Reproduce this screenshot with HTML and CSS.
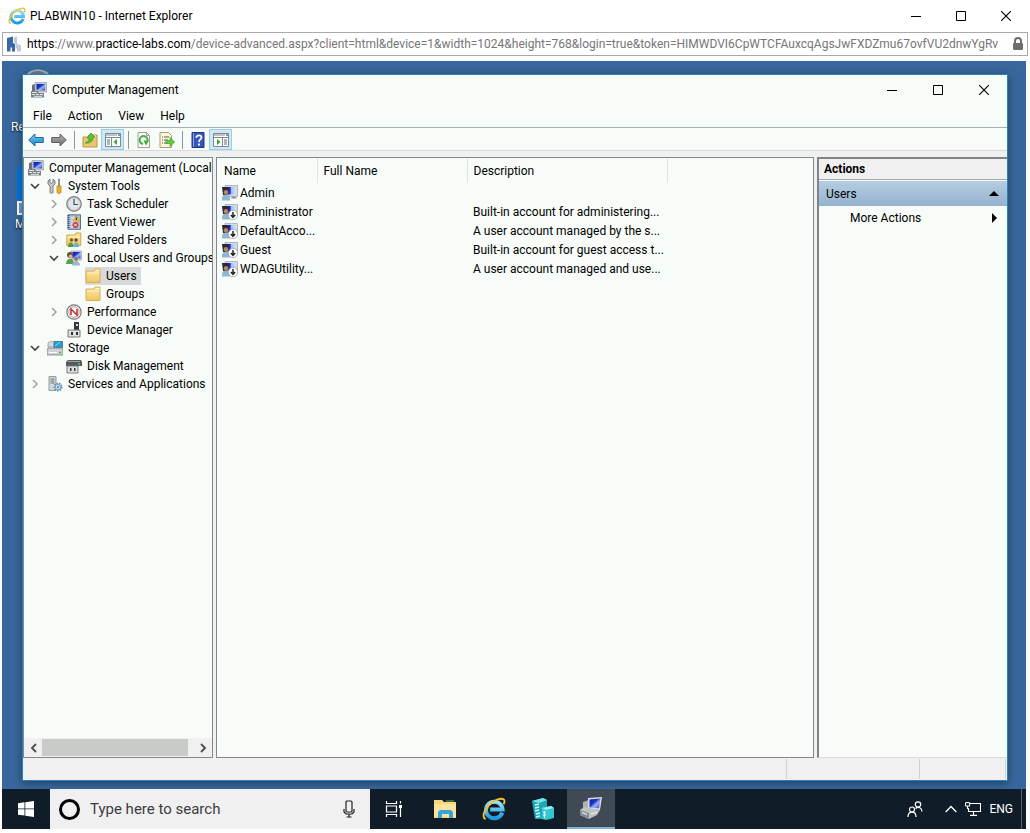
FILE: index.html
```html
<!DOCTYPE html>
<html lang="en">
<head>
<meta charset="utf-8">
<title>PLABWIN10 - Internet Explorer</title>
<link rel="stylesheet" href="styles.css">
</head>
<body>
<svg class="sprites" aria-hidden="true">
  <defs>
    <linearGradient id="g-screen" x1="0" y1="0" x2="1" y2="1"><stop offset="0" stop-color="#0a1fae"/><stop offset=".4" stop-color="#1b35c8"/><stop offset=".6" stop-color="#9db4f4"/><stop offset="1" stop-color="#2a46cf"/></linearGradient>
    <linearGradient id="g-pale" x1="0" y1="0" x2="1" y2="0"><stop offset="0" stop-color="#0b1c9c"/><stop offset=".35" stop-color="#2038b4"/><stop offset=".5" stop-color="#a9bdf2"/><stop offset="1" stop-color="#d5e0fb"/></linearGradient>
    <linearGradient id="g-folder" x1="0" y1="0" x2="0" y2="1"><stop offset="0" stop-color="#fbe7a2"/><stop offset="1" stop-color="#efc763"/></linearGradient>
    <linearGradient id="g-blue" x1="0" y1="0" x2="0" y2="1"><stop offset="0" stop-color="#7fd0f5"/><stop offset="1" stop-color="#1479c4"/></linearGradient>
    <linearGradient id="g-grey" x1="0" y1="0" x2="0" y2="1"><stop offset="0" stop-color="#b5b5b5"/><stop offset="1" stop-color="#6b6b6b"/></linearGradient>
    <linearGradient id="g-ie" x1="0" y1="0" x2="0" y2="1"><stop offset="0" stop-color="#9be4fb"/><stop offset="1" stop-color="#1b9ae0"/></linearGradient>
  </defs>
  <symbol id="i-ie" viewBox="0 0 24 24">
    <path d="M20.2 15.6A8.3 8.3 0 1 1 20.6 12.6H8.2" fill="none" stroke="url(#g-ie)" stroke-width="4"/>
    <path d="M3.6 22.2C-1.5 20 3.5 9.5 11.500 4.500 17 1.200 22.500.5 22.500 4.200c0 1-.3 2-.9 3" fill="none" stroke="#f3c12f" stroke-width="1.900"/>
  </symbol>
  <symbol id="i-site" viewBox="0 0 16 16">
    <path d="M1 2l6-1.500v7l2-1v9H6v-4H4.500v4H1z" fill="#3767a8"/><path d="M8 1.500l3-1v7l4 2v6h-4v-3H9.500V8L8 8z" fill="#c3cbd6"/>
  </symbol>
  <symbol id="i-lock" viewBox="0 0 12 14"><path d="M3 6V4a3 3 0 0 1 6 0v2" fill="none" stroke="#6d6d6d" stroke-width="2"/><rect x="1" y="6" width="10" height="7" rx="1" fill="#6d6d6d"/></symbol>
  <symbol id="i-min" viewBox="0 0 10 10"><path d="M0 5.500h10" stroke="#000"/></symbol>
  <symbol id="i-max" viewBox="0 0 10 10"><path d="M.5.5h9v9h-9z" fill="none" stroke="#000"/></symbol>
  <symbol id="i-close" viewBox="0 0 10 10"><path d="M0 0l10 10M10 0L0 10" stroke="#000" stroke-width="1.100"/></symbol>
  <symbol id="i-computer" viewBox="0 0 16 16">
    <path d="M1 3l3-1v7H1z" fill="#6b6f72"/><path d="M4 .5h11.500v9.500H4z" fill="#c7cdd6" stroke="#8a929e" stroke-width=".6"/><path d="M5.500 2h8.500v6.500H5.500z" fill="url(#g-screen)"/>
    <path d="M0 9h7l1 2h5v4.500H0z" fill="#7b8184"/><path d="M1 10.500h5M1 12.500h3M5 12.500h3M9 12.500h3M3 14.300h8" stroke="#e1e4e4" stroke-width="1"/>
  </symbol>
  <symbol id="i-back" viewBox="0 0 16 16"><path d="M.7 8L7 2v3.500h8.300v5H7V14z" fill="url(#g-blue)" stroke="#1c6ca4"/></symbol>
  <symbol id="i-forward" viewBox="0 0 16 16"><path d="M15.300 8L9 2v3.500H.7v5H9V14z" fill="url(#g-grey)" stroke="#616161"/></symbol>
  <symbol id="i-up" viewBox="0 0 16 16"><path d="M1 5h5l1-2h8v12H1z" fill="#eac670" stroke="#b99545"/><path d="M9 4h5" stroke="#fff3c8"/><path d="M3 11c3-1 4-2 4-5H5l4-5 4 4-2 .5c0 4-3 6-8 5.500z" fill="#5dbe35" stroke="#2f8c1a" stroke-width=".6"/></symbol>
  <symbol id="i-tree" viewBox="0 0 16 16"><path d="M.5 1.500h15v13H.5z" fill="#fff" stroke="#7d8790"/><path d="M1 3h11M1 5.500h14M6.500 6v8" stroke="#7d8790"/><path d="M13 3h2" stroke="#333"/><path d="M2 8h3M2 10h3M2 12h3" stroke="#526a80"/><path d="M12 7v6L8.500 10z" fill="#37a532"/></symbol>
  <symbol id="i-panel" viewBox="0 0 16 16"><path d="M.5 1.500h15v13H.5z" fill="#fff" stroke="#7d8790"/><path d="M1 3h11M1 5.500h14M9.500 6v8" stroke="#7d8790"/><path d="M13 3h2" stroke="#333"/><path d="M11 8h3M11 10h3M11 12h3" stroke="#526a80"/><path d="M4 7v6l3.500-3z" fill="#37a532"/></symbol>
  <symbol id="i-refresh" viewBox="0 0 16 16"><path d="M2 .5h8.500l3 3v12H2z" fill="#fafafa" stroke="#a0a0a0"/><path d="M10.500.5v3h3" fill="none" stroke="#a0a0a0"/><path d="M7 12A4 4 0 1 1 11.500 9" fill="none" stroke="#3faf36" stroke-width="1.900"/><path d="M7.500 8.500h5.500l-3 5z" fill="#3faf36"/></symbol>
  <symbol id="i-export" viewBox="0 0 16 16"><path d="M1 .5h8.500l3 3v12H1z" fill="#fdf6d6" stroke="#a69c78"/><path d="M3 5h1M5 5h5M3 8h1M5 8h4M3 11h1M5 11h4" stroke="#4c5868"/><path d="M7 8.500h4V5.500l4.700 4.500-4.700 4.500v-3H7z" fill="#67ca42" stroke="#3a9c24" stroke-width=".6"/></symbol>
  <symbol id="i-help" viewBox="0 0 16 16"><path d="M2 .5h12v15H2z" fill="#3456b8" stroke="#1c3688"/><path d="M3.500 1v14" stroke="#8aa2e4"/><path d="M6.300 5.700c0-3.200 5.200-3 5.200-.2 0 2-2.500 2-2.500 4.500" fill="none" stroke="#fff" stroke-width="1.700"/><path d="M8 11.500h2v2H8z" fill="#fff"/></symbol>
  <symbol id="i-tools" viewBox="0 0 16 16"><path d="M3 1v3.500l1.500 1L6 4.500V1l2 2v3L6 8v6.500c0 1-3 1-3 0V8L1 6V3z" fill="#c8c8c8" stroke="#5f6366" stroke-width=".8"/><path d="M11 1l2-.5V8h-2z" fill="#8d949a"/><path d="M10 8h4v6c0 2-4 2-4 0z" fill="#eeb21e" stroke="#a97811" stroke-width=".7"/></symbol>
  <symbol id="i-clock" viewBox="0 0 16 16"><circle cx="8" cy="8" r="7.200" fill="#eef3fa" stroke="#85898d" stroke-width="1.500"/><circle cx="8" cy="8" r="5.600" fill="#dde6f1" stroke="#d8c9a8" stroke-width=".8"/><path d="M8 3v5.500h4" fill="none" stroke="#3a4c66" stroke-width="1.200"/></symbol>
  <symbol id="i-event" viewBox="0 0 16 16"><path d="M2 .8h12.500v14.500H2z" fill="#a9c1de" stroke="#5c7194"/><path d="M2.500 1v14" stroke="#46566e" stroke-width="2" stroke-dasharray="1 1"/><path d="M5 4h5M5 7h4M5 10h3M5 13h2" stroke="#fff"/><path d="M10 1.500l4 5.500H7z" fill="#f6cb2f" stroke="#b48813" stroke-width=".5"/><path d="M10.300 3.500v2.500" stroke="#000"/><circle cx="9.500" cy="11" r="3" fill="#db3c33"/><path d="M8.300 9.800l2.400 2.400m0-2.400l-2.400 2.400" stroke="#fff"/></symbol>
  <symbol id="i-folder" viewBox="0 0 16 16"><path d="M1 14.500V3h8l1-2h5v13.500z" fill="url(#g-folder)" stroke="#d3a94c" stroke-width=".9"/><path d="M10.500 2.500h4" stroke="#fff8de"/><path d="M2 5h12" stroke="#fff1c0"/></symbol>
  <symbol id="i-shared" viewBox="0 0 16 16"><path d="M.8 13.500V3h8l1-2h5v12.500z" fill="url(#g-folder)" stroke="#c9a146" stroke-width=".9"/><path d="M2 5h12" stroke="#fff1c0"/><circle cx="5.500" cy="8" r="1.700" fill="#815433"/><circle cx="10" cy="8" r="1.700" fill="#5d4738"/><path d="M2 15c0-6 5.500-6 5.500 0z" fill="#4b9c43"/><path d="M7.500 15c0-6 5.500-6 5.500 0z" fill="#72afc9"/></symbol>
  <symbol id="i-people" viewBox="0 0 16 16"><path d="M5 1h10.500v9H5z" fill="#ccd4e0" stroke="#8b94a2" stroke-width=".6"/><path d="M6.500 2h8v6.500h-8z" fill="url(#g-screen)"/><circle cx="4" cy="5" r="3" fill="#6d5133"/><circle cx="4.600" cy="6.200" r="1.800" fill="#e2b189"/><path d="M0 14c0-7 8-7 8 0z" fill="#5da150"/><circle cx="10" cy="9" r="2" fill="#9b7657"/><path d="M6 15.500c0-6 8-6 8 0z" fill="#9bb7cd"/></symbol>
  <symbol id="i-user" viewBox="0 0 16 16"><path d="M3 .5h12.500v11H3z" fill="#d5dae3" stroke="#96a0ae" stroke-width=".7"/><path d="M5 2h9v7.500H5z" fill="url(#g-pale)"/><path d="M10 11.500h3l2 2H9z" fill="#8e959e"/><path d="M0 2h5l1 3-1 5H1z" fill="#2d2928"/><circle cx="4" cy="7.300" r="2.200" fill="#bd8663"/><path d="M0 15.500v-3c1-4 7-4 8 0v3z" fill="#8db8cf"/></symbol>
  <symbol id="i-user-off" viewBox="0 0 16 16"><use href="#i-user"/><circle cx="11" cy="11" r="4.700" fill="#fff" stroke="#8f959b" stroke-width=".7"/><path d="M11 8v5M8.800 11l2.200 2.300 2.200-2.300" fill="none" stroke="#20252a" stroke-width="1.500"/></symbol>
  <symbol id="i-perf" viewBox="0 0 16 16"><circle cx="8" cy="8" r="7.200" fill="#f8f6f5" stroke="#777" stroke-width="1.200"/><circle cx="8" cy="8" r="5.200" fill="#fff" stroke="#a98d89" stroke-width=".8"/><path d="M5 11V5l6 6V5" fill="none" stroke="#c52a26" stroke-width="1.500"/></symbol>
  <symbol id="i-device" viewBox="0 0 16 16"><path d="M8 0h5v9H8z" fill="#34383a"/><path d="M10 2h2v2h-2z" fill="#d8dbdc"/><path d="M2 8h12v7H2z" fill="#dfe0df" stroke="#777b7d"/><path d="M5 10h2v3H5zM10 10h2v3h-2z" fill="#303436"/></symbol>
  <symbol id="i-storage" viewBox="0 0 16 16"><path d="M1 3c2-2.500 6-2 7 0v4H1z" fill="#d4d8da" stroke="#8e9496" stroke-width=".7"/><path d="M7 1.500h8.500v6H7z" fill="#249fd6" stroke="#376c84" stroke-width=".8"/><path d="M8 6l5-4" stroke="#8bd7f3"/><path d="M1 8h14l1 2.500V15H0v-4.500z" fill="#cdd1d2" stroke="#767c7f" stroke-width=".8"/><path d="M2 12.500h8" stroke="#fff"/><path d="M12 12.500h2" stroke="#4ab234" stroke-width="1.500"/></symbol>
  <symbol id="i-disk" viewBox="0 0 16 16"><path d="M2 2h13l1 2v4H0V4z" fill="#54595b"/><path d="M2 3.500h12" stroke="#9fa4a6"/><path d="M12 6h2" stroke="#65ce4c" stroke-width="1.400"/><path d="M1 8h11v7H1z" fill="#dfe0df" stroke="#777b7d"/><path d="M4 10h1.500v3H4zM8 10h1.500v3H8z" fill="#303436"/></symbol>
  <symbol id="i-services" viewBox="0 0 16 16"><path d="M2 .5h7v14H2z" fill="#d3d7d9" stroke="#7f868a" stroke-width=".8"/><path d="M3.500 3h4M3.500 5h4M3.500 7h4" stroke="#6d7478"/><circle cx="11" cy="11" r="3.600" fill="#b5d2e6" stroke="#608fad" stroke-width="1.800" stroke-dasharray="1.500 1"/><circle cx="11" cy="11" r="2.700" fill="#cbe0ed" stroke="#6c9cbb" stroke-width=".8"/><circle cx="11" cy="11" r="1" fill="#527e9b"/></symbol>
  <symbol id="i-win" viewBox="0 0 16 16"><path d="M0 2.200l6.500-.9v6.200H0zM7.300 1.200L16 0v7.500H7.300zM0 8.300h6.500v6.300L0 13.700zM7.300 8.300H16V16l-8.700-1.200z" fill="#fff"/></symbol>
  <symbol id="i-mic" viewBox="0 0 12 18"><rect x="3" y="1" width="6" height="11" rx="1" fill="none" stroke="#222" stroke-width="1.200"/><path d="M1 9v3l2 2h6l2-2V9M6 14v3M3.500 17h5" fill="none" stroke="#222" stroke-width="1.200"/></symbol>
  <symbol id="i-taskview" viewBox="0 0 18 16"><path d="M1.500 0v2.500h10V0M1.500 16v-2.500h10V16M1.500 5h10v6h-10zM15.500 0v2.500M15.500 7v9" fill="none" stroke="#fff" stroke-width="1.200"/><path d="M14 4h3v3h-3z" fill="#fff"/></symbol>
  <symbol id="i-explorer" viewBox="0 0 24 20"><path d="M1 1h8l2 2h12v16H1z" fill="#f7d67c"/><path d="M1 5h22v13H1z" fill="#fbe39b"/><path d="M13 2h8" stroke="#5fb65d"/><path d="M5 19v-6l2-2h11l2 2v6h-4v-4H9v4z" fill="#35a6dc"/></symbol>
  <symbol id="i-server" viewBox="0 0 24 24"><path d="M1 4l11-3 4 2v19H4z" fill="#1ea7b5"/><path d="M1 4l11-3 4 2-8 3z" fill="#7be4e8"/><path d="M4 8l4-1M4 11l4-1M4 14l4-1M5 17l4-1M5 20l4-1" stroke="#d8fbfb" stroke-width="1.500"/><path d="M11 11l9-2 3 2v10l-8 2-4-1z" fill="#33c8d1"/><path d="M11 11l9-2 3 2-8 2z" fill="#98eef0"/><path d="M13.500 14v7M12 15l3 .5M12 18h3" stroke="#e2ffff"/></symbol>
  <symbol id="i-mmc" viewBox="0 0 24 24"><path d="M4 6l6-2v10l-6 2z" fill="#aeb3b6"/><path d="M9 2l14-1-2 13-12-1z" fill="#dcdfe2"/><path d="M10.500 3.500l11-1L20 12.300l-9.500-.8z" fill="url(#g-screen)"/><path d="M1 14l4-3 16 3-3 5-8 4-9-4z" fill="#bcc2c5"/><path d="M1 14l9 3v6l-9-4z" fill="#878e92"/><path d="M3 16.500l5 2M12 18l6-2" stroke="#eef0f1" stroke-width="1.300"/></symbol>
  <symbol id="i-contacts" viewBox="0 0 16 16"><g fill="none" stroke="#fff" stroke-width="1.200"><circle cx="5" cy="8.500" r="2.500"/><path d="M1 16c0-6.500 8-6.500 8 0"/><circle cx="11" cy="3.500" r="2.700"/><path d="M8.500 7.500c3-2.500 6.500-.5 6.500 3"/></g></symbol>
  <symbol id="i-caret" viewBox="0 0 12 8"><path d="M.7 7L6 1.500 11.300 7" fill="none" stroke="#fff" stroke-width="1.300"/></symbol>
  <symbol id="i-net" viewBox="0 0 16 14"><path d="M5 1.500h10.500v8H3.500V6M8.500 10v3M5 13.400h7" fill="none" stroke="#fff" stroke-width="1.100"/><path d="M.6.600h4v3.500h-4zM2.500 4v3" fill="none" stroke="#fff"/></symbol>
  <symbol id="i-open" viewBox="0 0 10 10"><path d="M1 3l4 4 4-4" fill="none" stroke="#404040" stroke-width="1.600"/></symbol>
  <symbol id="i-closed" viewBox="0 0 10 10"><path d="M3 1l4 4-4 4" fill="none" stroke="#a0a0a0" stroke-width="1.500"/></symbol>
  <symbol id="i-left" viewBox="0 0 10 10"><path d="M7 1L3 5l4 4" fill="none" stroke="#505050" stroke-width="1.900"/></symbol>
  <symbol id="i-right" viewBox="0 0 10 10"><path d="M3 1l4 4-4 4" fill="none" stroke="#505050" stroke-width="1.900"/></symbol>
</svg>

<header class="titlebar browser-title">
  <svg class="icon-18"><use href="#i-ie"/></svg>
  <h1 class="title">PLABWIN10 - Internet Explorer</h1>
  <button class="win-btn" aria-label="Minimize"><svg><use href="#i-min"/></svg></button>
  <button class="win-btn" aria-label="Maximize"><svg><use href="#i-max"/></svg></button>
  <button class="win-btn" aria-label="Close"><svg><use href="#i-close"/></svg></button>
</header>
<div class="address">
  <svg class="icon-16"><use href="#i-site"/></svg>
  <div class="url" role="textbox" aria-label="Address" contenteditable="true" spellcheck="false"><span class="url-strong">https</span>://www.<span class="url-strong">practice-labs.com</span>/device-advanced.aspx?client=html&amp;device=1&amp;width=1024&amp;height=768&amp;login=true&amp;token=HIMWDVI6CpWTCFAuxcqAgsJwFXDZmu67ovfVU2dnwYgRv</div>
  <svg class="lock"><use href="#i-lock"/></svg>
</div>

<div class="desktop">
  <div class="wallpaper">
    <div class="shortcut shortcut-bin"><svg viewBox="0 0 28 12"><path d="M3 5c4-6 18-6 22 0z" fill="#a3b0bc"/><path d="M6 5c3-4 12-4 16 0z" fill="#667a8e"/></svg><span>Re</span></div>
    <div class="shortcut shortcut-edge"><span class="edge-tile"><span class="link-badge"></span></span><span>M</span></div>

    <main class="window">
      <header class="titlebar">
        <svg class="icon-16"><use href="#i-computer"/></svg>
        <h2 class="title">Computer Management</h2>
        <button class="win-btn" aria-label="Minimize"><svg><use href="#i-min"/></svg></button>
        <button class="win-btn" aria-label="Maximize"><svg><use href="#i-max"/></svg></button>
        <button class="win-btn" aria-label="Close"><svg><use href="#i-close"/></svg></button>
      </header>
      <nav class="menu">
        <button>File</button><button>Action</button><button>View</button><button>Help</button>
      </nav>
      <div class="toolbar">
        <button aria-label="Back"><svg><use href="#i-back"/></svg></button>
        <button aria-label="Forward"><svg><use href="#i-forward"/></svg></button>
        <span class="sep"></span>
        <button aria-label="Up"><svg><use href="#i-up"/></svg></button>
        <button class="on" aria-label="Show console tree"><svg><use href="#i-tree"/></svg></button>
        <span class="sep"></span>
        <button aria-label="Refresh"><svg><use href="#i-refresh"/></svg></button>
        <button aria-label="Export list"><svg><use href="#i-export"/></svg></button>
        <span class="sep"></span>
        <button aria-label="Help"><svg><use href="#i-help"/></svg></button>
        <button class="on" aria-label="Show action pane"><svg><use href="#i-panel"/></svg></button>
      </div>

      <div class="panes">
        <section class="pane tree-pane">
          <div class="tree">
            <div class="node"><svg class="icon-16"><use href="#i-computer"/></svg><span>Computer Management (Local</span></div>
            <ul>
              <li>
                <div class="node"><button class="twist" aria-label="Collapse"><svg><use href="#i-open"/></svg></button><svg class="icon-16"><use href="#i-tools"/></svg><span>System Tools</span></div>
                <ul>
                  <li class="node"><button class="twist" aria-label="Expand"><svg><use href="#i-closed"/></svg></button><svg class="icon-16"><use href="#i-clock"/></svg><span>Task Scheduler</span></li>
                  <li class="node"><button class="twist" aria-label="Expand"><svg><use href="#i-closed"/></svg></button><svg class="icon-16"><use href="#i-event"/></svg><span>Event Viewer</span></li>
                  <li class="node"><button class="twist" aria-label="Expand"><svg><use href="#i-closed"/></svg></button><svg class="icon-16"><use href="#i-shared"/></svg><span>Shared Folders</span></li>
                  <li>
                    <div class="node"><button class="twist" aria-label="Collapse"><svg><use href="#i-open"/></svg></button><svg class="icon-16"><use href="#i-people"/></svg><span>Local Users and Groups</span></div>
                    <ul>
                      <li class="node"><span class="twist"></span><span class="selected"><svg class="icon-16"><use href="#i-folder"/></svg><span>Users</span></span></li>
                      <li class="node"><span class="twist"></span><svg class="icon-16"><use href="#i-folder"/></svg><span>Groups</span></li>
                    </ul>
                  </li>
                  <li class="node"><button class="twist" aria-label="Expand"><svg><use href="#i-closed"/></svg></button><svg class="icon-16"><use href="#i-perf"/></svg><span>Performance</span></li>
                  <li class="node"><span class="twist"></span><svg class="icon-16"><use href="#i-device"/></svg><span>Device Manager</span></li>
                </ul>
              </li>
              <li>
                <div class="node"><button class="twist" aria-label="Collapse"><svg><use href="#i-open"/></svg></button><svg class="icon-16"><use href="#i-storage"/></svg><span>Storage</span></div>
                <ul><li class="node"><span class="twist"></span><svg class="icon-16"><use href="#i-disk"/></svg><span>Disk Management</span></li></ul>
              </li>
              <li class="node"><button class="twist" aria-label="Expand"><svg><use href="#i-closed"/></svg></button><svg class="icon-16"><use href="#i-services"/></svg><span>Services and Applications</span></li>
            </ul>
          </div>
          <div class="scrollbar">
            <button aria-label="Scroll left"><svg><use href="#i-left"/></svg></button>
            <div class="track"><div class="thumb"></div></div>
            <button aria-label="Scroll right"><svg><use href="#i-right"/></svg></button>
          </div>
        </section>

        <section class="pane list-pane">
          <table class="list">
            <colgroup><col class="col-name"><col class="col-full"><col class="col-desc"><col></colgroup>
            <thead><tr><th>Name</th><th>Full Name</th><th>Description</th><td></td></tr></thead>
            <tbody>
              <tr><td><div class="user"><svg class="icon-16"><use href="#i-user"/></svg>Admin</div></td><td></td><td></td></tr>
              <tr><td><div class="user"><svg class="icon-16"><use href="#i-user-off"/></svg>Administrator</div></td><td></td><td>Built-in account for administering...</td></tr>
              <tr><td><div class="user"><svg class="icon-16"><use href="#i-user-off"/></svg>DefaultAcco...</div></td><td></td><td>A user account managed by the s...</td></tr>
              <tr><td><div class="user"><svg class="icon-16"><use href="#i-user-off"/></svg>Guest</div></td><td></td><td>Built-in account for guest access t...</td></tr>
              <tr><td><div class="user"><svg class="icon-16"><use href="#i-user-off"/></svg>WDAGUtility...</div></td><td></td><td>A user account managed and use...</td></tr>
            </tbody>
          </table>
        </section>

        <aside class="pane actions">
          <h3 class="actions-title">Actions</h3>
          <button class="actions-group">Users<svg viewBox="0 0 10 5"><path d="M0 5l5-5 5 5z"/></svg></button>
          <button class="actions-item">More Actions<svg viewBox="0 0 5 10"><path d="M0 0l5 5-5 5z"/></svg></button>
        </aside>
      </div>
      <footer class="status"><span></span><span></span><span></span></footer>
    </main>
  </div>

  <nav class="taskbar">
    <button class="task" aria-label="Start"><svg class="icon-16"><use href="#i-win"/></svg></button>
    <div class="search">
      <span class="cortana"></span>
      <input type="text" placeholder="Type here to search" aria-label="Search">
      <svg class="mic"><use href="#i-mic"/></svg>
    </div>
    <button class="task" aria-label="Task view"><svg class="taskview"><use href="#i-taskview"/></svg></button>
    <button class="task next" aria-label="File Explorer"><svg class="icon-24"><use href="#i-explorer"/></svg></button>
    <button class="task" aria-label="Internet Explorer"><svg class="icon-24"><use href="#i-ie"/></svg></button>
    <button class="task" aria-label="Server Manager"><svg class="icon-24"><use href="#i-server"/></svg></button>
    <button class="task active" aria-label="Computer Management"><svg class="icon-24"><use href="#i-mmc"/></svg></button>
    <div class="tray">
      <button aria-label="People"><svg class="icon-16"><use href="#i-contacts"/></svg></button>
      <button class="tray-more" aria-label="Show hidden icons"><svg class="caret"><use href="#i-caret"/></svg></button>
      <button aria-label="Network"><svg class="icon-16"><use href="#i-net"/></svg></button>
      <button>ENG</button>
      <span class="peek"></span>
    </div>
  </nav>
</div>
</body>
</html>
```
FILE: styles.css
```css
* { box-sizing: border-box; }
body {
  margin: 0;
  height: 100vh;
  display: flex;
  flex-direction: column;
  background: #fff;
  color: #000;
  font: 12px/18px Roboto, "Open Sans", sans-serif;
  overflow: hidden;
}
button { font: inherit; color: inherit; background: none; border: 0; padding: 0; margin: 0; }
svg { display: block; flex: none; }
h1, h2, h3 { margin: 0; font: inherit; }
ul { list-style: none; margin: 0; padding: 0; }
.sprites { position: absolute; width: 0; height: 0; }
.icon-16 { width: 16px; height: 16px; }
.icon-18 { width: 18px; height: 18px; }
.icon-24 { width: 24px; height: 24px; }

.titlebar { display: flex; align-items: center; height: 30px; padding: 0 3px 0 8px; gap: 5px; flex: none; }
.browser-title { height: 32px; padding: 0 4px 0 8px; gap: 4px; }
.title { flex: 1; }
.win-btn { width: 41px; height: 100%; display: grid; place-items: center; }
.win-btn svg { width: 10px; height: 10px; }

.address {
  display: flex; align-items: center; gap: 5px; flex: none;
  height: 24px; margin: 0 2px 5px; padding: 0 3px;
  border: 1px solid #a9a9a9;
}
.url { flex: 1; min-width: 0; overflow: hidden; white-space: nowrap; color: #767676; outline: 0; }
.url-strong { color: #000; }
.lock { width: 12px; height: 14px; }

.desktop { flex: 1; display: flex; flex-direction: column; min-height: 0; margin: 0 4px 4px 2px; }
.wallpaper { flex: 1; position: relative; overflow: hidden; background: #37679c; }
.shortcut { position: absolute; color: #fff; text-shadow: 0 1px 2px #000; }
.shortcut-bin { left: 9px; top: 8px; }
.shortcut-bin svg { width: 28px; height: 12px; margin-left: 13px; }
.shortcut-bin span { display: block; margin-top: 37px; }
.shortcut-edge { left: 13px; top: 106px; }
.edge-tile { display: flex; align-items: flex-end; width: 38px; height: 48px; margin-left: 2px; background: #0078e0; }
.link-badge { width: 14px; height: 14px; border: 2px solid #fff; background: #7d9dbd; }
.window {
  position: absolute; left: 20px; top: 13px; right: 18px; bottom: 8px;
  display: flex; flex-direction: column;
  background: #f8fcf9; border: 1px solid #2a82b4;
  box-shadow: 0 2px 8px #0006;
}

.menu { display: flex; height: 22px; padding-left: 10px; gap: 16px; align-items: center; flex: none; }
.toolbar {
  display: flex; align-items: flex-end; flex: none; height: 24px; padding-left: 1px;
  border-top: 1px solid #a8b0b4; border-bottom: 1px solid #d8dbdc;
}
.toolbar button { width: 23px; height: 21px; padding-top: 1px; display: grid; place-items: center; border: 1px solid transparent; }
.toolbar .on { background: #cfe8f6; border-color: #9acdec; }
.toolbar svg { width: 16px; height: 16px; }
.sep { width: 1px; height: 18px; background: #8f9598; margin: 0 3px 1px 4px; }

.panes {
  flex: 1; min-height: 0; display: grid; grid-template-columns: 190px 1fr 190px; gap: 3px;
  padding-top: 6px; background: #f0f0f0;
}
.pane { background: #f8fcf9; border: 1px solid #828790; min-width: 0; overflow: hidden; }
.tree-pane { display: flex; flex-direction: column; }
.tree { flex: 1; padding: 1px 0 0 4px; overflow: hidden; white-space: nowrap; }
.tree ul ul { padding-left: 19px; }
.node { display: flex; align-items: center; height: 18px; gap: 5px; }
.twist { width: 14px; height: 16px; display: grid; place-items: center; flex: none; }
.twist svg { width: 10px; height: 10px; }
.selected { display: flex; align-items: center; gap: 5px; background: #d9d9d9; padding-right: 4px; }
.scrollbar { display: flex; height: 19px; padding: 1px; background: #f0f0f0; flex: none; }
.scrollbar button { width: 17px; display: grid; place-items: center; }
.scrollbar svg { width: 10px; height: 10px; }
.track { flex: 1; }
.thumb { width: 96%; height: 100%; background: #c8cbc8; }

.list { width: 100%; table-layout: fixed; border-collapse: collapse; }
.col-name { width: 100px; }
.col-full { width: 150px; }
.col-desc { width: 200px; }
.list th, .list td { padding: 0 0 0 6px; text-align: left; font-weight: 400; white-space: nowrap; }
.list thead tr { height: 25px; }
.list th { border-right: 1px solid #dfe4e1; }
.list tbody tr { height: 19px; }
.list th:first-child { padding-left: 7px; }
.list td:first-child { padding-left: 5px; }
.user { display: flex; align-items: center; gap: 2px; }

.actions { border-width: 2px 0 1px 2px; border-color: #808488 #dadcdc #dadcdc #808488; }
.actions-title { height: 21px; padding: 1px 5px; background: #f0f0f0; border-bottom: 1px solid #a5a8aa; font-weight: 700; }
.actions-group, .actions-item { display: flex; align-items: center; justify-content: space-between; width: 100%; height: 25px; padding: 0 8px 0 7px; }
.actions-group { margin-top: 1px; background: linear-gradient(#b6cde2, #95b2cf); }
.actions-group svg { width: 10px; height: 5px; }
.actions-item { height: 24px; padding: 0 10px 0 31px; }
.actions-item svg { width: 5px; height: 10px; }

.status { display: grid; grid-template-columns: 1fr 133px 86px; height: 22px; padding: 1px 1px 1px 0; background: #f0f0f0; flex: none; }
.status span { border-right: 1px solid #d0d0d0; }

.taskbar { display: flex; height: 40px; background: #101d28; color: #fff; flex: none; }
.task { width: 49px; height: 100%; display: grid; place-items: center; }
.task:first-child, .task.active, .search + .task { width: 48px; }
.search { display: flex; align-items: center; width: 320px; padding: 0 15px 0 9px; background: #f0f0f0; }
.cortana { width: 21px; height: 21px; border: 3px solid #000; border-radius: 50%; }
.search input { flex: 1; min-width: 0; padding: 0 0 0 10px; border: 0; background: none; font: 15px/20px Roboto, "Open Sans", sans-serif; outline: 0; }
.search input::placeholder { color: #3c3c3c; opacity: 1; }
.mic { width: 12px; height: 18px; }
.taskview { width: 18px; height: 16px; }
.next { margin-left: 2px; }
.active { background: #3f4a55; border-bottom: 2px solid #84afd8; }
.tray { display: flex; align-items: center; gap: 8px; margin-left: auto; }
.tray-more { margin: 0 0 0 14px; }
.caret { width: 12px; height: 8px; }
.peek { width: 5px; height: 40px; border-left: 1px solid #56616b; }
```
